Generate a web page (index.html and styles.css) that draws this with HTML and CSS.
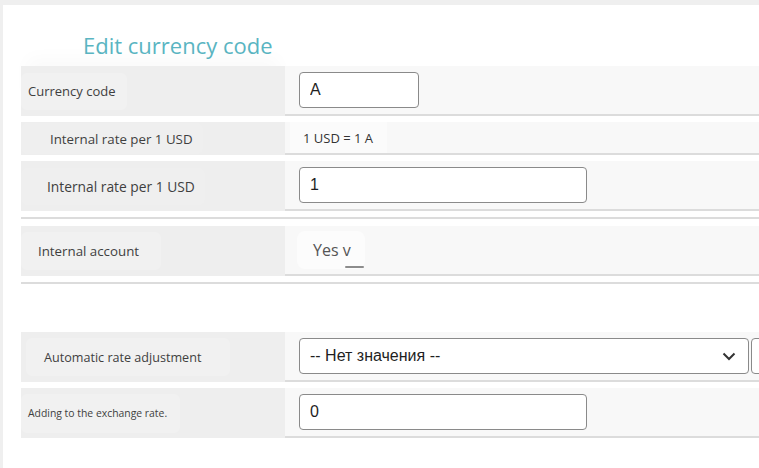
FILE: index.html
```html
<!DOCTYPE html>
<html>
<head>
<meta charset="utf-8">
<link rel="stylesheet" href="styles.css">
</head>
<body>
<div class="panel">
  <h1 class="title">Edit currency code</h1>
  <div class="form">
    <div class="row row-first">
      <div class="lbl"><span class="lbl-box lb1">Currency code</span></div>
      <div class="val"><input class="inp inp-short" value="A"></div>
    </div>
    <div class="row row-short">
      <div class="lbl"><span class="lbl-box lb2">Internal rate per 1 USD</span></div>
      <div class="val val-tight"><span class="static">1 USD = 1 A</span></div>
    </div>
    <div class="row">
      <div class="lbl"><span class="lbl-box lb3">Internal rate per 1 USD</span></div>
      <div class="val"><input class="inp inp-mid" value="1"></div>
    </div>
    <div class="sep"></div>
    <div class="row row-after-sep">
      <div class="lbl"><span class="lbl-box lb4">Internal account</span></div>
      <div class="val val-yes"><span class="yes">Yes <span class="yes-v">v</span></span></div>
    </div>
    <div class="sep sep-big"></div>
    <div class="row">
      <div class="lbl"><span class="lbl-box lb5">Automatic rate adjustment</span></div>
      <div class="val">
        <div class="select">
          <span>-- Нет значения --</span>
          <svg class="chev" width="14" height="9" viewBox="0 0 14 9"><polyline points="1.5,1.5 7,7 12.5,1.5" fill="none" stroke="#333" stroke-width="2"/></svg>
        </div>
        <div class="addon"></div>
      </div>
    </div>
    <div class="row">
      <div class="lbl"><span class="lbl-box lb6">Adding to the exchange rate.</span></div>
      <div class="val"><input class="inp inp-mid" value="0"></div>
    </div>
  </div>
</div>
</body>
</html>
```
FILE: styles.css
```css
html, body {
  margin: 0;
  padding: 0;
  height: 100%;
  overflow: hidden;
}
body {
  background: #efefef;
  font-family: "Open Sans", "Liberation Sans", sans-serif;
}
.panel {
  margin: 5px 0 0 3px;
  background: #ffffff;
  height: calc(100% - 5px);
  padding-left: 18px;
  box-sizing: border-box;
  overflow: hidden;
}
.title {
  margin: 0;
  padding: 26px 0 7px 62px;
  font-size: 22px;
  line-height: 28px;
  font-weight: 400;
  color: #5ab5c2;
}
.form {
  display: flex;
  flex-direction: column;
}
.row {
  display: grid;
  grid-template-columns: 264px 1fr;
  height: 50px;
  margin-bottom: 6px;
}
.row-first .lbl {
  box-shadow: 0 -14px 18px -6px rgba(0,0,0,0.025);
}
.row-short {
  height: 33px;
}
.row-after-sep {
  margin-top: 7px;
}
.lbl {
  background: #eeeeee;
  display: flex;
  align-items: center;
}
.lbl-box {
  background: #f1f1f1;
  border-radius: 6px;
  font-size: 13px;
  color: #3f3f3f;
  height: 37px;
  display: flex;
  align-items: center;
  box-sizing: border-box;
  white-space: nowrap;
}
.lb1 { padding: 0 12px 0 7px; }
.lb2 { padding: 0 10px 0 29px; background: #efefef; height: 31px; font-size: 13.3px; }
.lb3 { padding: 0 10px 0 26px; background: #efefef; font-size: 13.8px; }
.lb4 { padding: 0 22px 0 17px; height: 38px; font-size: 13.3px; }
.lb5 { margin-left: 5px; padding: 0 29px 0 18px; height: 38px; font-size: 12.6px; }
.lb6 { padding: 0 13px 0 7px; font-size: 10.4px; height: 39px; }
.val {
  background: #f8f8f8;
  border-bottom: 2px solid #dcdcdc;
  box-sizing: border-box;
  display: flex;
  align-items: center;
  padding-left: 14px;
  gap: 2px;
  min-width: 0;
}
.val-tight {
  padding-left: 5px;
}
.static {
  background: #fbfbfb;
  height: 31px;
  display: flex;
  align-items: center;
  padding: 0 14px 0 13px;
  font-size: 13px;
  color: #333;
}
.val-yes {
  padding-left: 12px;
}
.yes {
  background: #fcfcfc;
  border-radius: 8px;
  height: 38px;
  display: flex;
  align-items: center;
  padding: 0 14px 0 16px;
  font-size: 16px;
  color: #555;
  white-space: pre;
}
.yes-v {
  position: relative;
}
.yes-v::after {
  content: "";
  position: absolute;
  left: 2px;
  right: -13px;
  bottom: -7px;
  height: 2px;
  border-radius: 1px;
  background: #8c8c8c;
  filter: blur(0.5px);
}
.inp {
  height: 36px;
  box-sizing: border-box;
  border: 1px solid #8a8a8a;
  border-radius: 4px;
  background: #fff;
  padding: 0 10px;
  font-family: "Liberation Sans", Arial, sans-serif;
  font-size: 16px;
  color: #1f1f1f;
  margin: 0;
  outline: none;
}
.inp-short { width: 120px; }
.inp-mid { width: 288px; }
.select {
  width: 450px;
  height: 36px;
  box-sizing: border-box;
  border: 1px solid #8a8a8a;
  border-radius: 4px;
  background: #fff;
  padding: 0 8px 0 10px;
  display: flex;
  align-items: center;
  justify-content: space-between;
  font-family: "Liberation Sans", Arial, sans-serif;
  font-size: 16px;
  color: #1f1f1f;
  flex: none;
}
.chev {
  margin-right: 4px;
}
.addon {
  width: 30px;
  height: 36px;
  box-sizing: border-box;
  border: 1px solid #8a8a8a;
  border-radius: 4px;
  background: #fff;
  flex: none;
}
.sep {
  height: 2px;
  background: #dcdcdc;
}
.sep-big {
  margin-bottom: 48px;
}
```
